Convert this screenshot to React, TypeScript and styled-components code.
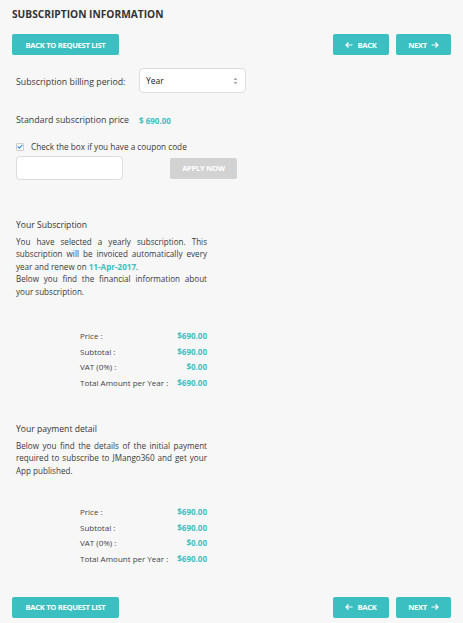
import styled, { createGlobalStyle } from 'styled-components';

const GlobalStyle = createGlobalStyle`
    html, body {
        margin: 0;
        padding: 0;
        background: #f7f7f7;
        font-family: "Open Sans", "Liberation Sans", sans-serif;
        color: #3a3a3a;
    }
`

const Page = styled.div`
    width: 463px;
    min-height: 623px;
    box-sizing: border-box;
    padding: 7px 12px 5px 12px;
    background: #f7f7f7;
`

const Title = styled.h1`
    margin: 0;
    font-size: 10.2px;
    font-weight: 700;
    color: #333;
    text-transform: uppercase;
    line-height: 14px;
`

const NavBar = styled.div<{ $top: string }>`
    display: flex;
    align-items: center;
    justify-content: space-between;
    margin-top: ${p => p.$top};
`

const NavGroup = styled.div`
    display: flex;
    gap: 7px;
`

const TealButton = styled.button<{ $w: number }>`
    width: ${p => p.$w}px;
    height: 21px;
    border: none;
    border-radius: 2px;
    background: #3bbfc0;
    color: #fff;
    font-family: "Open Sans", "Liberation Sans", sans-serif;
    font-size: 7.6px;
    font-weight: 700;
    letter-spacing: -0.3px;
    text-transform: uppercase;
    display: flex;
    align-items: center;
    justify-content: center;
    gap: 4px;
    padding: 0;
    cursor: pointer;
`

const Form = styled.div`
    padding: 0 4px;
`

const FieldRow = styled.div<{ $top: number }>`
    display: flex;
    align-items: center;
    margin-top: ${p => p.$top}px;
    font-size: 8.8px;
`

const Label = styled.span`
    width: 123px;
`

const SelectBox = styled.div`
    width: 107px;
    height: 25px;
    box-sizing: border-box;
    border: 1px solid #ddd;
    border-radius: 4px;
    background: #fff;
    display: flex;
    align-items: center;
    justify-content: space-between;
    padding: 0 7px 0 6px;
    font-size: 8.5px;
    color: #222;
    margin-top: -2px;
`

const Amount = styled.span`
    color: #3bbfc0;
    font-weight: 700;
    font-size: 8px;
`

const CheckRow = styled.label`
    display: flex;
    align-items: center;
    gap: 7px;
    margin-top: 15px;
    font-size: 8.2px;
`

const CheckBox = styled.span`
    width: 8px;
    height: 8px;
    box-sizing: border-box;
    border: 1px solid #ccc;
    border-radius: 1px;
    background: #fff;
    display: flex;
    align-items: center;
    justify-content: center;
`

const CouponRow = styled.div`
    display: flex;
    align-items: center;
    margin-top: 4px;
`

const CouponInput = styled.div`
    width: 107px;
    height: 24px;
    box-sizing: border-box;
    border: 1px solid #ddd;
    border-radius: 4px;
    background: #fff;
`

const ApplyButton = styled.button`
    margin-left: 47px;
    width: 67px;
    height: 21px;
    border: none;
    border-radius: 2px;
    background: #d2d2d2;
    color: #fff;
    font-family: "Open Sans", "Liberation Sans", sans-serif;
    font-size: 7.6px;
    font-weight: 700;
    letter-spacing: -0.3px;
    padding: 0;
`

const Section = styled.section<{ $top: number }>`
    margin-top: ${p => p.$top}px;
    padding: 0 4px;
    width: 191px;
`

const SectionTitle = styled.h2`
    margin: 0;
    font-size: 8.6px;
    font-weight: 400;
    color: #333;
    line-height: 12px;
`

const Paragraph = styled.p`
    margin: 5px 0 0 0;
    font-size: 8.1px;
    line-height: 12.4px;
    text-align: justify;
    color: #3a3a3a;
`

const Highlight = styled.span`
    color: #3bbfc0;
    font-weight: 700;
`

const Summary = styled.div<{ $top: number }>`
    display: grid;
    grid-template-columns: auto auto;
    justify-content: space-between;
    width: 127px;
    margin: ${p => p.$top}px 0 0 68px;
    row-gap: 3.6px;
    font-size: 8px;
    line-height: 12px;
`

const SumLabel = styled.span`
    color: #444;
`

const SumValue = styled.span`
    color: #3bbfc0;
    font-weight: 700;
    text-align: right;
`

const ArrowLeft = () => (
    <svg width="8" height="6" viewBox="0 0 8 6" fill="none" stroke="#fff" strokeWidth="1.2">
        <path d="M7.5 3H1M3.5 0.5L1 3l2.5 2.5" />
    </svg>
)

const ArrowRight = () => (
    <svg width="8" height="6" viewBox="0 0 8 6" fill="none" stroke="#fff" strokeWidth="1.2">
        <path d="M0.5 3H7M4.5 0.5L7 3 4.5 5.5" />
    </svg>
)

const Nav = ({ top }: { top: string }) => (
    <NavBar $top={top}>
        <TealButton $w={107}>Back to request list</TealButton>
        <NavGroup>
            <TealButton $w={56}><ArrowLeft /> Back</TealButton>
            <TealButton $w={55}>Next <ArrowRight /></TealButton>
        </NavGroup>
    </NavBar>
)

const rows = [
    ['Price :', '$690.00'],
    ['Subtotal :', '$690.00'],
    ['VAT (0%) :', '$0.00'],
    ['Total Amount per Year :', '$690.00'],
]

const SummaryTable = ({ top }: { top: number }) => (
    <Summary $top={top}>
        {rows.flatMap(([l, v]) => [
            <SumLabel key={l}>{l}</SumLabel>,
            <SumValue key={l + 'v'}>{v}</SumValue>,
        ])}
    </Summary>
)

const App = () => {
    return (
        <Page>
            <GlobalStyle />
            <Title>Subscription Information</Title>
            <Nav top="13px" />
            <Form>
                <FieldRow $top={15}>
                    <Label>Subscription billing period:</Label>
                    <SelectBox>
                        <span>Year</span>
                        <svg width="5" height="8" viewBox="0 0 5 8" fill="#aaa">
                            <path d="M2.5 0.5L4.5 3H0.5z M2.5 7.5L0.5 5h4z" />
                        </svg>
                    </SelectBox>
                </FieldRow>
                <FieldRow $top={21}>
                    <Label>Standard subscription price</Label>
                    <Amount>$ 690.00</Amount>
                </FieldRow>
                <CheckRow>
                    <CheckBox>
                        <svg width="6" height="5" viewBox="0 0 6 5" fill="none" stroke="#3a8ee6" strokeWidth="1.2">
                            <path d="M0.7 2.5l1.6 1.6L5.3 0.8" />
                        </svg>
                    </CheckBox>
                    Check the box if you have a coupon code
                </CheckRow>
                <CouponRow>
                    <CouponInput />
                    <ApplyButton>APPLY NOW</ApplyButton>
                </CouponRow>
            </Form>
            <Section $top={39}>
                <SectionTitle>Your Subscription</SectionTitle>
                <Paragraph>
                    You have selected a yearly subscription. This subscription will be invoiced automatically every year and renew on <Highlight>11-Apr-2017</Highlight>.
                    <br />
                    Below you find the financial information about your subscription.
                </Paragraph>
            </Section>
            <SummaryTable top={32} />
            <Section $top={34}>
                <SectionTitle>Your payment detail</SectionTitle>
                <Paragraph>
                    Below you find the details of the initial payment required to subscribe to JMango360 and get your App published.
                </Paragraph>
            </Section>
            <SummaryTable top={29} />
            <Nav top="32px" />
        </Page>
    )
}

export default App
